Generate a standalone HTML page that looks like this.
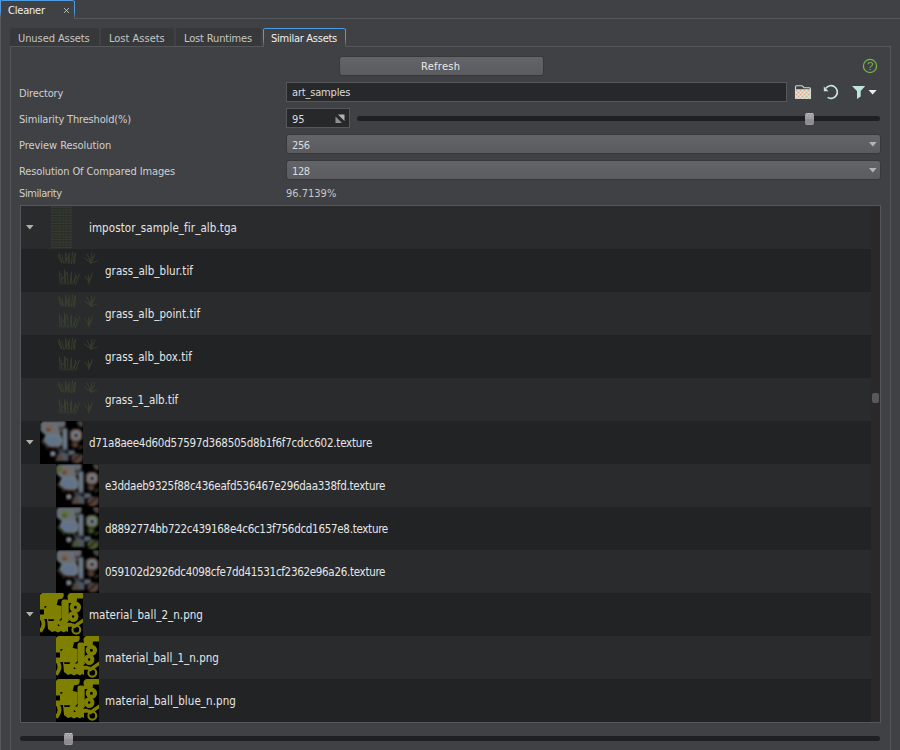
<!DOCTYPE html>
<html lang="en">
<head>
<meta charset="utf-8">
<title>Cleaner</title>
<style>
html,body{margin:0;padding:0;}
body{width:900px;height:750px;overflow:hidden;background:#404144;position:relative;
  font-family:"DejaVu Sans Condensed","DejaVu Sans","Liberation Sans",sans-serif;font-size:11px;color:#c8c8c8;
  font-stretch:condensed;}
.abs{position:absolute;}
.t{position:absolute;white-space:nowrap;line-height:14px;height:14px;}
/* window tab */
#wtab{left:0;top:0;width:75px;height:19px;box-sizing:border-box;border-top:1px solid #4f9be0;border-top-right-radius:3px;border-top-left-radius:3px;}
#wtabr{left:74px;top:1px;width:1px;height:18px;background:linear-gradient(#4f9be0 0,#4f9be0 60%,#56585c 95%);}
#wline{left:75px;top:18px;width:825px;height:1px;background:#55565a;}
#wleft{left:0;top:0;width:1px;height:750px;background:linear-gradient(#4f9be0 0,#4f9be0 11px,#56585c 18px,#56585c 100%);}
/* sub tabs */
.stab{position:absolute;top:28px;height:18px;background:#37383a;border-top-left-radius:3px;border-top-right-radius:3px;}
.stab .t{top:4px;color:#c4c6c8;}
#pane{left:10px;top:46px;width:881px;height:720px;border:1px solid #55565a;box-sizing:border-box;}
#atab{left:263px;top:28px;width:83px;height:19px;box-sizing:border-box;background:#404144;border-top:1px solid #4f9be0;border-top-left-radius:3px;border-top-right-radius:3px;}
#atab:before,#atab:after{content:"";position:absolute;top:0;width:1px;height:18px;background:linear-gradient(#4f9be0 0,#4f9be0 50%,#55565a 95%);}
#atab:before{left:0;}#atab:after{right:0;}
#atab .t{top:3px;left:8px;letter-spacing:-0.26px;color:#f0f0f0;}
/* controls */
#btn{left:339px;top:56px;width:205px;height:20px;box-sizing:border-box;border:1px solid #37383a;border-radius:3px;background:linear-gradient(#636468,#5b5b5f);}
#btn .t{left:81px;top:3px;letter-spacing:0.28px;color:#eaeaea;}
.lbl{left:19px;color:#ced0d0;}
.inp{position:absolute;box-sizing:border-box;border:1px solid #55575b;background:#27282a;}
.combo{position:absolute;left:286px;width:595px;height:20px;box-sizing:border-box;border:1px solid #37383a;border-radius:3px;background:linear-gradient(#636468,#5b5b5f);}
.combo .t{left:5px;top:4px;letter-spacing:-0.4px;color:#dcdcdc;}
.arr{position:absolute;width:7.6px;height:4.6px;background:#b4b4b4;clip-path:polygon(0 0,100% 0,50% 100%);}
.track{position:absolute;height:5px;border-radius:3px;background:#201f21;}
.handle{position:absolute;width:9px;height:12px;border-radius:2px;background:linear-gradient(#a3a1a5 0,#9f9da1 45%,#8f8f8f 55%,#8c8c8c 90%,#a6a6a6 100%);}
.handle:before{content:"";position:absolute;left:1px;top:0;width:1px;height:1px;background:#9bd69b;box-shadow:2px 0 #9bd69b,3px 0 #9bd69b,5px 0 #9bd69b,6px 0 #9bd69b,1px 2px #a0cfa0,4px 2px #a0cfa0;}
/* list */
#list{left:20px;top:205px;width:861px;height:518px;box-sizing:border-box;border:1px solid #55575b;background:#2a2829;overflow:hidden;}
.row{position:absolute;left:0;width:850px;height:43px;}
.row.a{background:#2a2b2d;}
.row.b{background:#222325;}
.row .t{font-family:"DejaVu Sans Condensed","DejaVu Sans","Liberation Sans",sans-serif;font-size:11.5px;color:#e6e6e6;top:15px;line-height:15px;height:15px;}
.row.p .t{left:68px;}
.row.c .t{left:84px;}
.row .arr{left:5px;top:19px;background:#b0b0b0;}
.th{position:absolute;top:0;width:43px;height:43px;}
.row.p .th{left:19px;}
.row.c .th{left:35px;}
</style>
</head>
<body>

<svg width="0" height="0" style="position:absolute">
  <defs>
    <filter id="bl" x="-10%" y="-10%" width="120%" height="120%"><feGaussianBlur stdDeviation="0.9"/></filter>
    <filter id="bl2" x="-10%" y="-10%" width="120%" height="120%"><feGaussianBlur stdDeviation="0.35"/></filter>
    <pattern id="dith" width="4" height="4" patternUnits="userSpaceOnUse">
      <rect width="4" height="4" fill="#b9e0d6"/><rect x="0" y="0" width="1" height="1" fill="#e39a7c"/><rect x="2" y="2" width="1" height="1" fill="#e39a7c"/><rect x="2" y="0" width="1" height="1" fill="#d6efe8"/><rect x="0" y="2" width="1" height="1" fill="#d6efe8"/>
    </pattern>
    <pattern id="imp" width="3.6" height="2.6875" patternUnits="userSpaceOnUse">
      <rect x="0" y="0.7" width="3" height="1.2" fill="#34412a"/>
    </pattern>
    <!-- grass thumbnail -->
    <symbol id="grass" viewBox="0 0 43 43">
      <g fill="none" stroke="#43552f" stroke-width="0.85" stroke-linecap="round" opacity="0.62" filter="url(#bl2)">
        <path d="M6 14 L3 4 M7.5 14 L6 6 M9 14.5 L10 5 M11 14 L9.5 3.5 M12.5 14.5 L13.5 4 M14 14 L12 6 M15.5 14.5 L16.5 3 M17 14 L18.5 5 M18.5 14.5 L19.5 4 M5 13 L2 6 M10 12 L13 7"/>
        <path d="M35 14 L31 5 M35 14 L39 5 M35 14 L28.5 9 M35 14 L41 12 M34.5 13.5 L36 4 M33.5 12 L37 8"/>
        <path d="M4 35 L3.5 22 M6 35 L5 25 M8 35.5 L9 23 M10 35 L8.5 21.5 M12 35.5 L11.5 24 M14 35 L15.5 23 M16 35.5 L15 25 M18 35 L19.5 25 M19.5 35.5 L23.5 25 M17 33 L21 27 M6.5 30 L11 23"/>
        <path d="M33 35 L32.5 26 M33 33 L29 27 M33.5 32 L36.5 24 M33 30 L36 28 M32 34 L34.5 29"/>
      </g>
    </symbol>
    <!-- texture thumbnail -->
    <symbol id="tex" viewBox="0 0 43 43">
      <rect width="43" height="43" fill="#000"/>
      <g filter="url(#bl)">
        <path d="M0.5 3 Q1 0.3 4 0.3 H19 V6 L20.5 12.5 L17 13.8 H5 L0.5 10 Z" fill="#676e76"/>
        <path d="M18 0 H25.5 V5 Q24 7 20 6.8 L18 5 Z" fill="#62676f"/>
        
        <ellipse cx="9.4" cy="7.3" rx="4.6" ry="3.6" fill="#7c6353"/>
        <ellipse cx="8.4" cy="8.7" rx="2" ry="1.6" fill="#484644"/>
        <path d="M6 12.8 H20.3 L22.6 19 L21.3 25.3 L9 25.8 L3 19.5 Z" fill="#6a7581"/>
        <ellipse cx="12.6" cy="19.8" rx="6.3" ry="4.2" fill="#60738b"/>
        <path d="M9 25 H20 L19 27 H11Z" fill="#574339"/>
        <rect x="22.3" y="6.7" width="5.4" height="22.8" rx="2.5" fill="#626d79"/>
        <rect x="23.8" y="9" width="2.2" height="17" rx="1.1" fill="#6d7985"/>
        <path d="M19 7.5 L22.4 6.9 V11.5 L20.3 11 Z" fill="#574339"/>
        <path d="M29.9 10.5 L33 8.1 H39 L42.3 11 V17.8 L39 20.5 H33 L29.9 18 Z" fill="#6e5d55"/>
        <circle cx="36.1" cy="14.3" r="4" fill="#79838c"/>
        <circle cx="36.1" cy="14.5" r="2" fill="#2a1c18"/>
        <path d="M36.7 0 H43 V5.5 Q40 7 38 4 Z" fill="#4a4542"/>
        <ellipse cx="35" cy="23.6" rx="4.2" ry="3.4" fill="#2e201a"/>
        <path d="M33 22 L36 21 L37.5 25 L34 26.5Z" fill="#574339"/>
        <path d="M38.5 27.5 L42.5 24 L43 25.5 L39.5 28.5Z" fill="#574339"/>
        <circle cx="12.9" cy="32.8" r="4.4" fill="#111114"/>
        <circle cx="12.9" cy="32.8" r="2.05" fill="#8c9096"/>
        <path d="M0 20 L2.5 19.5 L9.5 27 L8 29 Z" fill="#2e201a"/>
        <path d="M17 27 L25 28 L26 32 L19 32.5 Z" fill="#34373c"/>
        <path d="M18 33.5 L21 31.5 L28.3 32.5 L28.7 40 H15.5 Z" fill="#4d545d"/>
        <path d="M17.8 35 L21.3 33 L22.8 39.6 H16 Z" fill="#574339"/>
        <path d="M27.5 29.2 H34.5 L35.3 33 L29 34.8 Z" fill="#56626e"/>
        <path d="M31 36 L36 32.5 L42.4 33 V40 L38 42.6 L32 41.5 Z" fill="#574339"/>
        <path d="M37 33 L42.4 33 V38 Z" fill="#4a4a4e"/>
        <path d="M32 41 L41 33" stroke="#0c0908" stroke-width="1.5"/>
      </g>
    </symbol>
    <symbol id="texa" viewBox="0 0 43 43">
      <rect width="43" height="43" fill="#000"/>
      <g filter="url(#bl)">
        <path d="M0.5 3 Q1 0.3 4 0.3 H19 V6 L20.5 12.5 L17 13.8 H5 L0.5 10 Z" fill="#676e76"/>
        <path d="M18 0 H25.5 V5 Q24 7 20 6.8 L18 5 Z" fill="#62676f"/>
        <ellipse cx="3" cy="5" rx="3" ry="4" fill="#56663f"/><ellipse cx="5" cy="21" rx="2" ry="3" fill="#4f5f3c"/>
        <ellipse cx="9.4" cy="7.3" rx="4.6" ry="3.6" fill="#7c6353"/>
        <ellipse cx="8.4" cy="8.7" rx="2" ry="1.6" fill="#484644"/>
        <path d="M6 12.8 H20.3 L22.6 19 L21.3 25.3 L9 25.8 L3 19.5 Z" fill="#6a7581"/>
        <ellipse cx="12.6" cy="19.8" rx="6.3" ry="4.2" fill="#60738b"/>
        <path d="M9 25 H20 L19 27 H11Z" fill="#574339"/>
        <rect x="22.3" y="6.7" width="5.4" height="22.8" rx="2.5" fill="#626d79"/>
        <rect x="23.8" y="9" width="2.2" height="17" rx="1.1" fill="#6d7985"/>
        <path d="M19 7.5 L22.4 6.9 V11.5 L20.3 11 Z" fill="#574339"/>
        <path d="M29.9 10.5 L33 8.1 H39 L42.3 11 V17.8 L39 20.5 H33 L29.9 18 Z" fill="#6e5d55"/>
        <circle cx="36.1" cy="14.3" r="4" fill="#79838c"/>
        <circle cx="36.1" cy="14.5" r="2" fill="#2a1c18"/>
        <path d="M36.7 0 H43 V5.5 Q40 7 38 4 Z" fill="#4a4542"/>
        <ellipse cx="35" cy="23.6" rx="4.2" ry="3.4" fill="#2e201a"/>
        <path d="M33 22 L36 21 L37.5 25 L34 26.5Z" fill="#574339"/>
        <path d="M38.5 27.5 L42.5 24 L43 25.5 L39.5 28.5Z" fill="#574339"/>
        <circle cx="12.9" cy="32.8" r="4.4" fill="#111114"/>
        <circle cx="12.9" cy="32.8" r="2.05" fill="#8c9096"/>
        <path d="M0 20 L2.5 19.5 L9.5 27 L8 29 Z" fill="#2e201a"/>
        <path d="M17 27 L25 28 L26 32 L19 32.5 Z" fill="#34373c"/>
        <path d="M18 33.5 L21 31.5 L28.3 32.5 L28.7 40 H15.5 Z" fill="#4d545d"/>
        <path d="M17.8 35 L21.3 33 L22.8 39.6 H16 Z" fill="#574339"/>
        <path d="M27.5 29.2 H34.5 L35.3 33 L29 34.8 Z" fill="#56626e"/>
        <path d="M31 36 L36 32.5 L42.4 33 V40 L38 42.6 L32 41.5 Z" fill="#574339"/>
        <path d="M37 33 L42.4 33 V38 Z" fill="#4a4a4e"/>
        <path d="M32 41 L41 33" stroke="#0c0908" stroke-width="1.5"/>
      </g>
    </symbol>
    <symbol id="texg" viewBox="0 0 43 43">
      <rect width="43" height="43" fill="#000"/>
      <g filter="url(#bl)">
        <path d="M0.5 3 Q1 0.3 4 0.3 H19 V6 L20.5 12.5 L17 13.8 H5 L0.5 10 Z" fill="#676e76"/>
        <path d="M18 0 H25.5 V5 Q24 7 20 6.8 L18 5 Z" fill="#62676f"/>
        
        <ellipse cx="9.4" cy="7.3" rx="4.6" ry="3.6" fill="#5f7338"/>
        <ellipse cx="8.4" cy="8.7" rx="2" ry="1.6" fill="#484644"/>
        <path d="M6 12.8 H20.3 L22.6 19 L21.3 25.3 L9 25.8 L3 19.5 Z" fill="#6a7581"/>
        <ellipse cx="12.6" cy="19.8" rx="6.3" ry="4.2" fill="#60738b"/>
        <path d="M9 25 H20 L19 27 H11Z" fill="#46562c"/>
        <rect x="22.3" y="6.7" width="5.4" height="22.8" rx="2.5" fill="#626d79"/>
        <rect x="23.8" y="9" width="2.2" height="17" rx="1.1" fill="#6d7985"/>
        <path d="M19 7.5 L22.4 6.9 V11.5 L20.3 11 Z" fill="#46562c"/>
        <path d="M29.9 10.5 L33 8.1 H39 L42.3 11 V17.8 L39 20.5 H33 L29.9 18 Z" fill="#5d6a4a"/>
        <circle cx="36.1" cy="14.3" r="4" fill="#79838c"/>
        <circle cx="36.1" cy="14.5" r="2" fill="#2a1c18"/>
        <path d="M36.7 0 H43 V5.5 Q40 7 38 4 Z" fill="#4a4542"/>
        <ellipse cx="35" cy="23.6" rx="4.2" ry="3.4" fill="#1f2a12"/>
        <path d="M33 22 L36 21 L37.5 25 L34 26.5Z" fill="#46562c"/>
        <path d="M38.5 27.5 L42.5 24 L43 25.5 L39.5 28.5Z" fill="#46562c"/>
        <circle cx="12.9" cy="32.8" r="4.4" fill="#111114"/>
        <circle cx="12.9" cy="32.8" r="2.05" fill="#8c9096"/>
        <path d="M0 20 L2.5 19.5 L9.5 27 L8 29 Z" fill="#1f2a12"/>
        <path d="M17 27 L25 28 L26 32 L19 32.5 Z" fill="#34373c"/>
        <path d="M18 33.5 L21 31.5 L28.3 32.5 L28.7 40 H15.5 Z" fill="#4d545d"/>
        <path d="M17.8 35 L21.3 33 L22.8 39.6 H16 Z" fill="#46562c"/>
        <path d="M27.5 29.2 H34.5 L35.3 33 L29 34.8 Z" fill="#56626e"/>
        <path d="M31 36 L36 32.5 L42.4 33 V40 L38 42.6 L32 41.5 Z" fill="#46562c"/>
        <path d="M37 33 L42.4 33 V38 Z" fill="#4a4a4e"/>
        <path d="M32 41 L41 33" stroke="#0c0908" stroke-width="1.5"/>
      </g>
    </symbol>
    <!-- yellow material ball thumbnail -->
    <symbol id="mat" viewBox="0 0 43 43">
      <rect width="43" height="43" fill="#000"/>
      <g fill="#808000" stroke="none" filter="url(#bl2)">
        <path d="M0 2 Q1 0 3 0 H17 Q19 3 18 6.5 L16.5 12.5 H0 Z"/>
        <path d="M17 0 H23.5 Q24.5 3 22.5 5.5 L18 6.5 Z"/>
        <path d="M27.5 3 Q28.5 0 31 0 H43 V5.5 H37 L36.5 10 H28 Z"/>
        <rect x="21.5" y="6.5" width="7.2" height="20" rx="2.5"/>
        <path d="M0 12 H17 L21.5 13 V26 H0 V21.5 H4 V16.5 H0 Z"/>
        <path d="M7 26 H28 L32 30.4 H34.4 V33.8 H28 V39 L26 38 L24 39.5 L21 38 L18 39.5 L15 38 L12 39 L8 36 Z"/>
        <path d="M43 25.5 V29.5 L34.5 35.5 L32 33 Z"/>
      </g>
      <g fill="none" stroke="#808000" filter="url(#bl2)">
        <path d="M0 23.5 Q7 31 0 38.5" stroke-width="3.6"/>
        <circle cx="35.4" cy="14.3" r="3.6" stroke-width="4.2"/>
        <circle cx="33.1" cy="23.6" r="3.3" stroke-width="4.1"/>
        <circle cx="36.3" cy="36.7" r="3.9" stroke-width="2.1"/>
      </g>
      <g fill="#000" filter="url(#bl2)">
        <path d="M4 13.5 L7 13 L5 15.5 Z"/>
        <path d="M8 26.2 H14.3 L13.5 28 H8.5 Z"/>
        <path d="M19 27.5 L21.8 24.7 L21.5 27.5 Z"/>
        <path d="M17.8 31 L20 32.5 L17.8 33.3 Z"/>
        <path d="M27 29.8 L29.5 27 L32 29.8 Z"/>
      </g>
    </symbol>
  </defs>
</svg>
<div id="wleft" class="abs"></div>
<div id="wtab" class="abs"><span class="t" style="left:8px;top:3px;color:#f0f0f0;letter-spacing:-0.2px;">Cleaner</span><svg class="abs" style="left:63px;top:6px" width="7" height="7" viewBox="0 0 7 7"><path d="M1.2 1.2L5.8 5.8M5.8 1.2L1.2 5.8" stroke="#bccdc5" stroke-width="0.95" fill="none"/></svg></div>
<div id="wtabr" class="abs"></div>
<div id="wline" class="abs"></div>

<div class="stab" style="left:10px;width:89px;"><span class="t" style="left:8px;letter-spacing:-0.08px;">Unused Assets</span></div>
<div class="stab" style="left:101px;width:73px;"><span class="t" style="left:8px;">Lost Assets</span></div>
<div class="stab" style="left:176px;width:85px;"><span class="t" style="left:8px;letter-spacing:-0.15px;">Lost Runtimes</span></div>
<div id="pane" class="abs"></div>
<div id="atab" class="abs"><span class="t">Similar Assets</span></div>

<div id="btn" class="abs"><span class="t">Refresh</span></div>

<!-- help icon -->
<svg class="abs" style="left:861px;top:57px" width="18" height="18" viewBox="0 0 18 18">
  <circle cx="9" cy="9" r="6.6" fill="none" stroke="#78b44a" stroke-width="1.2"/>
  <text x="9.1" y="13.2" text-anchor="middle" font-family="Liberation Sans, sans-serif" font-size="11.5" fill="#78b44a">?</text>
</svg>

<span class="t lbl" style="top:87px;letter-spacing:-0.15px;">Directory</span>
<div class="inp" style="left:286px;top:82px;width:501px;height:20px;"><span class="t" style="left:5px;top:3px;color:#dcdcdc;letter-spacing:-0.18px;">art_samples</span></div>

<!-- folder icon -->
<svg class="abs" style="left:794px;top:84px" width="18" height="16" viewBox="0 0 18 16">
  <path d="M1.5 14.5V2.7Q1.5 1.7 2.5 1.7H7.6Q8.3 1.7 8.8 2.3L10 3.7H15.5Q16.5 3.7 16.5 4.7V14.5Z" fill="none" stroke="#bfe3d9" stroke-width="1.1" stroke-linejoin="round"/>
  <rect x="2" y="5.2" width="14.2" height="9.3" fill="url(#dith)"/>
</svg>
<!-- reload icon -->
<svg class="abs" style="left:822px;top:84px" width="18" height="16" viewBox="0 0 18 16">
  <path d="M3.9 4.2A6.35 6.35 0 1 1 5.6 13.4" fill="none" stroke="#c4e6dc" stroke-width="1.7"/>
  <path d="M1.8 2.5V7.2H6.6Z" fill="#c4e6dc"/>
</svg>
<!-- filter icon -->
<svg class="abs" style="left:851px;top:85px" width="16" height="15" viewBox="0 0 16 15">
  <path d="M1 1H14.2L9.7 6V11.6L6 14V6Z" fill="#bfe4da"/>
</svg>
<svg class="abs" style="left:868px;top:89px" width="10" height="7" viewBox="0 0 10 7"><path d="M0.5 1H8.7L4.6 5.6Z" fill="#e6efec"/></svg>

<span class="t lbl" style="top:113px;letter-spacing:-0.17px;">Similarity Threshold(%)</span>
<div class="inp" style="left:286px;top:108px;width:64px;height:20px;"><span class="t" style="left:5px;top:4px;color:#dcdcdc;">95</span>
  <svg class="abs" style="left:48px;top:5px" width="10" height="10" viewBox="0 0 10 10"><path d="M3 0.5H9.5V7Z" fill="#b2b2b2"/><path d="M0.5 2.5V9H7Z" fill="#8e8e8e"/></svg>
</div>
<div class="track" style="left:357px;top:116px;width:523px;"></div>
<div class="handle" style="left:805px;top:113px;"></div>

<span class="t lbl" style="top:139px;letter-spacing:-0.06px;">Preview Resolution</span>
<div class="combo" style="top:134px;"><span class="t">256</span><div class="arr" style="left:582px;top:7px;"></div></div>

<span class="t lbl" style="top:165px;letter-spacing:-0.125px;">Resolution Of Compared Images</span>
<div class="combo" style="top:160px;"><span class="t">128</span><div class="arr" style="left:582px;top:7px;"></div></div>

<span class="t lbl" style="top:187px;letter-spacing:-0.4px;">Similarity</span>
<span class="t" style="left:286px;top:187px;color:#c6c8ca;">96.7139%</span>

<div id="list" class="abs">
  <div class="row a p" style="top:0px;"><div class="arr"></div><svg class="abs" style="left:30px;top:0" width="22" height="43"><rect width="21.2" height="43" fill="url(#imp)"/></svg><span class="t" style="letter-spacing:0.08px">impostor_sample_fir_alb.tga</span></div>
  <div class="row b c" style="top:43px;"><svg class="th" width="43" height="43" ><use href="#grass"/></svg><span class="t" style="letter-spacing:0.05px">grass_alb_blur.tif</span></div>
  <div class="row a c" style="top:86px;"><svg class="th" width="43" height="43" ><use href="#grass"/></svg><span class="t" style="letter-spacing:0.04px">grass_alb_point.tif</span></div>
  <div class="row b c" style="top:129px;"><svg class="th" width="43" height="43" ><use href="#grass"/></svg><span class="t" style="letter-spacing:0.02px">grass_alb_box.tif</span></div>
  <div class="row a c" style="top:172px;"><svg class="th" width="43" height="43" ><use href="#grass"/></svg><span class="t" style="letter-spacing:-0.1px">grass_1_alb.tif</span></div>
  <div class="row b p" style="top:215px;"><div class="arr"></div><svg class="th" width="43" height="43" ><use href="#tex"/></svg><span class="t" style="letter-spacing:-0.235px">d71a8aee4d60d57597d368505d8b1f6f7cdcc602.texture</span></div>
  <div class="row a c" style="top:258px;"><svg class="th" width="43" height="43" ><use href="#texa"/></svg><span class="t" style="letter-spacing:-0.254px">e3ddaeb9325f88c436eafd536467e296daa338fd.texture</span></div>
  <div class="row b c" style="top:301px;"><svg class="th" width="43" height="43" ><use href="#texg"/></svg><span class="t" style="letter-spacing:-0.29px">d8892774bb722c439168e4c6c13f756dcd1657e8.texture</span></div>
  <div class="row a c" style="top:344px;"><svg class="th" width="43" height="43" ><use href="#tex"/></svg><span class="t" style="letter-spacing:-0.3px">059102d2926dc4098cfe7dd41531cf2362e96a26.texture</span></div>
  <div class="row b p" style="top:387px;"><div class="arr"></div><svg class="th" width="43" height="43" ><use href="#mat"/></svg><span class="t" style="letter-spacing:0.02px">material_ball_2_n.png</span></div>
  <div class="row a c" style="top:430px;"><svg class="th" width="43" height="43" ><use href="#mat"/></svg><span class="t" style="letter-spacing:0.02px">material_ball_1_n.png</span></div>
  <div class="row b c" style="top:473px;"><svg class="th" width="43" height="43" ><use href="#mat"/></svg><span class="t" style="letter-spacing:0.07px">material_ball_blue_n.png</span></div>
  <div class="abs" style="left:851px;top:187px;width:7px;height:10px;border-radius:2px;background:#57585c;"></div>
</div>

<div class="track" style="left:20px;top:736px;width:860px;"></div>
<div class="handle" style="left:64px;top:733px;"></div>
</body>
</html>
